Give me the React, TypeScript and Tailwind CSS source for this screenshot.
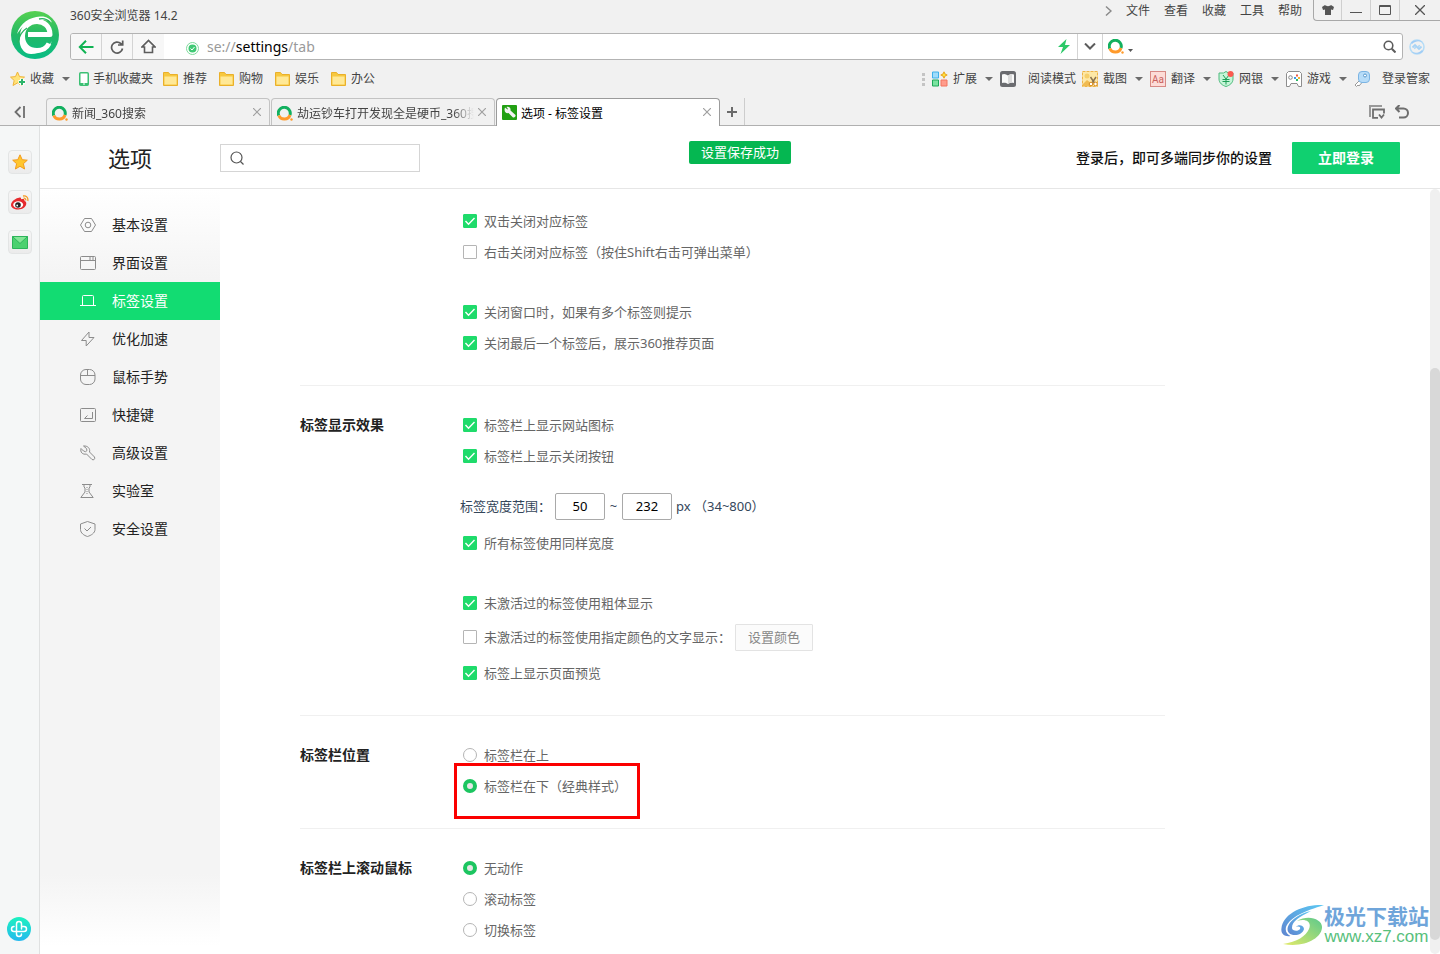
import { useState } from "react";
import type { ReactNode } from "react";
import clsx from "clsx";

const MENUS = ["文件", "查看", "收藏", "工具", "帮助"];
const FOLDERS = ["推荐", "购物", "娱乐", "办公"];

function Triangle() {
  return (
    <svg className="h-1 w-2 shrink-0" viewBox="0 0 8 4" fill="#6b6b6b">
      <path d="M0 0h8L4 4z" />
    </svg>
  );
}

function BrowserLogo() {
  return (
    <svg className="size-12" viewBox="0 0 48 48" fill="none">
      <defs>
        <linearGradient id="logo" x1="0" y1="0" x2="0" y2="1">
          <stop offset="0" stopColor="#56d150" />
          <stop offset="0.5" stopColor="#22b866" />
          <stop offset="1" stopColor="#08bd86" />
        </linearGradient>
      </defs>
      <circle cx="24" cy="24" r="24" fill="url(#logo)" />
      <path
        d="M17 23.500h22C39 15 33 10.500 26 10.500c-8 0-14.500 6-14.500 14.500S17 39.500 26 39.500c6 0 10-3 12-7"
        stroke="#fff"
        strokeWidth="5"
        strokeLinejoin="round"
      />
      <path d="M6 23C9 12 19 6 29 5.500c6-.5 10 2 12 6-4-3-8-3-12-2C18 10 11 15 6 23z" fill="#fff" />
      <path d="M41 30c-3 8-11 13-21 13-6 0-10-5-11-10-1-4 0-8 3-11-1 10 2 17 12 18 8 1 13-4 17-10z" fill="#fff" />
      <path d="M7 32c1-8 4-12 9-15M28 8c4-1 8 0 11 3" stroke="#27b45f" strokeWidth="1.300" />
    </svg>
  );
}

function SearchBrandIcon() {
  return (
    <svg className="size-4 shrink-0" viewBox="0 0 16 16" fill="none" strokeWidth="3">
      <path d="M1.700 9.500A6 6 0 1 1 13 9" stroke="#12b05f" />
      <path d="M1.800 9.500A6 6 0 0 0 13 9" stroke="#ff9a2b" />
      <circle cx="14.500" cy="13.500" r="1.200" fill="#ff9a2b" />
    </svg>
  );
}

function StarPlusIcon() {
  return (
    <svg className="size-4" viewBox="0 0 16 16">
      <path d="M7.500 1l2 4.600 5 .5-3.700 3.400 1 5-4.300-2.600L3 14.500l1.200-5L.500 6.100l5-.5z" fill="#ffe37a" stroke="#f0b53a" />
      <path d="M12 7.500v7M8.500 11h7" stroke="#fff" strokeWidth="4" />
      <path d="M12 8v6M9 11h6" stroke="#2db56b" strokeWidth="2" />
    </svg>
  );
}

function FolderIcon() {
  return (
    <svg className="h-[14px] w-[15px]" viewBox="0 0 15 14">
      <path d="M.5 13.500V.500h5l1.500 2h7.500v11z" fill="#f7c83f" stroke="#eab02a" />
      <path d="M1.500 4.500h12v8h-12z" fill="#ffe896" />
    </svg>
  );
}

const pluginIcons: Record<string, ReactNode> = {
  grid: (
    <>
      <path d="M.5 1h6v6h-6z" fill="#9fdcfb" stroke="#3fb0ea" />
      <path d="M.5 9h6v6h-6z" fill="#7be3a0" stroke="#1ea85a" />
      <path d="M9 9h6v6H9z" fill="#ff9c8c" stroke="#f3755f" />
      <path d="M12 .8l1 2.200 2.200 1-2.200 1-1 2.200-1-2.200-2.200-1 2.200-1z" fill="#ffe23a" stroke="#eaa51c" />
    </>
  ),
  book: (
    <>
      <rect width="16" height="16" rx="2.500" fill="#6b6c70" />
      <path d="M2 3.500c2-1 4-.5 6 1 2-1.500 4-2 6-1v8.500c-2-.5-4-.5-6 1-2-1.500-4-1.500-6-1z" fill="#fafafa" />
      <path d="M8 4.500c1.500-1 3-1.700 4-1.500v8.500c-1.500 0-2.800.5-4 1.500z" fill="#dcdcdc" />
    </>
  ),
  shot: (
    <>
      <rect x=".5" y=".5" width="15" height="15" fill="#fde8a6" stroke="#eeb445" strokeDasharray="3 1" />
      <circle cx="5" cy="5" r="2.500" fill="#f6cf6b" />
      <path d="M1 13l4-4 4 3 2 3H1z" fill="#f0bb52" />
      <path d="M8.500 6l4 6M14 6l-4 6" stroke="#8a7350" strokeWidth="1.500" />
      <circle cx="9" cy="13" r="1.800" fill="#fff" stroke="#d78b1c" />
      <circle cx="13.500" cy="13" r="1.800" fill="#fff" stroke="#d78b1c" />
    </>
  ),
  translate: (
    <>
      <rect x=".5" y=".5" width="15" height="15" fill="#fddcd7" stroke="#d78a85" />
      <text x="2" y="11.500" fontSize="10" fill="#c9625e" fontFamily="Roboto, sans-serif">Aa</text>
    </>
  ),
  bank: (
    <>
      <path d="M8 .500l2.500 1.500H15v6c0 4-3.500 6.500-7 7.500C4.500 14.500 1 12 1 8V2h4.500z" fill="#c6f5d8" stroke="#4cba7c" />
      <path d="M5 4l3 4 3-4M4.500 8.500h7M4.500 10.500h7M8 8v5.500" stroke="#1f9e57" fill="none" />
      <circle cx="12.500" cy="3" r="3" fill="#fb5a50" />
    </>
  ),
  game: (
    <>
      <path d="M2.500.500h11l2 2v13h-3l-1.500-3H5l-1.500 3h-3v-13z" fill="#fff" stroke="#8d8d8d" />
      <circle cx="4.500" cy="6.500" r="1.800" fill="none" stroke="#888" />
      <path d="M8 6h2v2H8z" fill="#3c9be8" />
      <path d="M10 3.500h2v2h-2z" fill="#f05b46" />
      <path d="M12 6h2v2h-2z" fill="#f5b32e" />
      <path d="M10 8h2v2h-2z" fill="#2bb867" />
    </>
  ),
  key: (
    <>
      <path d="M6 9l-5 5 1.500 1.500L4 14l1 1 3-3.500" fill="#fff" stroke="#999" />
      <rect x="4.500" y=".500" width="11" height="11" rx="3.500" fill="#b7dcf8" stroke="#7bb4e3" />
      <circle cx="11" cy="4.500" r="1.500" fill="#fff" stroke="#5898cd" />
    </>
  ),
};

const PLUGINS = [
  { icon: "grid", label: "扩展", menu: true },
  { icon: "book", label: "阅读模式", menu: false },
  { icon: "shot", label: "截图", menu: true },
  { icon: "translate", label: "翻译", menu: true },
  { icon: "bank", label: "网银", menu: true },
  { icon: "game", label: "游戏", menu: true },
  { icon: "key", label: "登录管家", menu: false },
];

function TitleRow() {
  return (
    <div className="flex h-[33px] items-start justify-between">
      <h1 className="pt-2 leading-4">360安全浏览器 14.2</h1>
      <div className="flex">
        <nav className="flex items-center gap-[14px] pr-[11px]">
          <button aria-label="更多">
            <svg className="h-3 w-[7px]" viewBox="0 0 7 12" fill="none" stroke="#8a8a8a" strokeWidth="1.500">
              <path d="M1 1.500L6 6l-5 4.500" />
            </svg>
          </button>
          {MENUS.map((menu) => (
            <button key={menu} className="leading-5">{menu}</button>
          ))}
        </nav>
        <div className="flex h-[21px] divide-x divide-[#cfcfcf] rounded-bl border-b border-l border-[#a8a8a8]">
          <button aria-label="皮肤" className="flex w-7 items-center justify-center">
            <svg className="h-[10px] w-3" viewBox="0 0 12 10" fill="#555">
              <path d="M0 2l3-2c1 1.500 5 1.500 6 0l3 2-1 3-2-.5V10H3V4.500L1 5z" />
            </svg>
          </button>
          <button aria-label="最小化" className="flex w-[29px] items-center justify-center">
            <svg className="size-3" viewBox="0 0 12 12"><path d="M0 8.500h12" stroke="#555" /></svg>
          </button>
          <button aria-label="最大化" className="flex w-[29px] items-center justify-center">
            <svg className="h-[10px] w-3" viewBox="0 0 12 10" fill="none" stroke="#555">
              <path d="M.5.500h11v9H.500zM.5 1.500h11" />
            </svg>
          </button>
          <button aria-label="关闭" className="flex w-10 items-center justify-center">
            <svg className="size-[10px]" viewBox="0 0 10 10" stroke="#555" strokeWidth="1.300">
              <path d="M0 0l10 10M10 0L0 10" />
            </svg>
          </button>
        </div>
      </div>
    </div>
  );
}

function AddressRow() {
  return (
    <div className="flex items-center gap-[6px] pr-[15px]">
      <div className="flex h-[27px] flex-1 overflow-hidden rounded-[3px] border border-[#b3b3b3] bg-white">
        <div className="flex divide-x divide-[#d4d4d4] bg-[#f7f7f7]">
          <button aria-label="后退" className="flex w-[31px] items-center justify-center">
            <svg className="h-[14px] w-4" viewBox="0 0 16 14" fill="none" stroke="#10b353" strokeWidth="2">
              <path d="M15.500 7H2M8 .700L1.800 7 8 13.300" />
            </svg>
          </button>
          <button aria-label="刷新" className="flex w-[31px] items-center justify-center">
            <svg className="size-[14px]" viewBox="0 0 14 14" fill="none" stroke="#5c5c5c" strokeWidth="1.700">
              <path d="M12.500 8.500A5.500 5.500 0 1 1 10.800 3.500L12.300 4.800M12.700.500V5H8" />
            </svg>
          </button>
          <button aria-label="主页" className="flex w-[31px] items-center justify-center">
            <svg className="size-[15px]" viewBox="0 0 15 15" fill="none" stroke="#5c5c5c" strokeWidth="1.600">
              <path d="M3.500 8v5.500h8V8H14L7.500 1.500 1 8z" />
            </svg>
          </button>
        </div>
        <div className="flex flex-1 items-center gap-2 pl-[22px]">
          <svg className="mt-1 size-[13px]" viewBox="0 0 13 13" fill="none">
            <circle cx="6.500" cy="6.500" r="6" stroke="#7fd99c" />
            <circle cx="6.500" cy="6.500" r="4" fill="#40c974" />
            <path d="M4.500 6.500L6 8l2.500-3" stroke="#fff" />
          </svg>
          <p className="text-sm leading-5 text-[#9a9a9a]">
            se://<span className="text-black">settings</span>/tab
          </p>
        </div>
        <div className="flex divide-x divide-[#d4d4d4]">
          <button aria-label="极速模式" className="flex w-7 items-center justify-center">
            <svg className="h-[15px] w-3" viewBox="0 0 12 15" fill="#2cc968">
              <path d="M8.500 0L0 8h5L2.500 15 12 6H7z" />
            </svg>
          </button>
          <button aria-label="历史地址" className="flex w-[25px] items-center justify-center">
            <svg className="h-[7px] w-3" viewBox="0 0 12 7" fill="none" stroke="#5c5c5c" strokeWidth="2">
              <path d="M1 .500l5 5 5-5" />
            </svg>
          </button>
          <div className="flex w-[299px] items-center justify-between pr-[6px] pl-[5px]">
            <button aria-label="搜索引擎" className="flex items-center gap-1">
              <SearchBrandIcon />
              <svg className="mt-2 h-[3px] w-[5px]" viewBox="0 0 5 3" fill="#555"><path d="M0 0h5L2.500 3z" /></svg>
            </button>
            <button aria-label="搜索">
              <svg className="size-[13px]" viewBox="0 0 13 13" fill="none" stroke="#5c5c5c" strokeWidth="1.600">
                <circle cx="5.500" cy="5.500" r="4.300" />
                <path d="M8.800 8.800l3.700 3.700" strokeWidth="2" />
              </svg>
            </button>
          </div>
        </div>
      </div>
      <svg className="size-4" viewBox="0 0 16 16" fill="none">
        <circle cx="8" cy="8" r="7" stroke="#b4dcf7" strokeWidth="1.500" />
        <path d="M2 3.500c3-3 9-3 11.500-.500C10 1.500 6 2 3 5zM14 12.500c-3 3-9 3-11.500.500C6 14.500 10 14 13 11z" fill="#9fcbf5" />
        <path d="M3.500 8.500L6 6l4 4 2.500-2.500M6.500 9.500L5.500 8.500M9.500 6.500l1 1" stroke="#a7d3f5" strokeWidth="1.800" />
      </svg>
    </div>
  );
}

function BookmarkBar() {
  return (
    <div className="flex h-[38px] items-center justify-between px-[10px]">
      <div className="flex items-center">
        <button className="flex items-center gap-1">
          <StarPlusIcon />
          收藏
          <span className="ml-1"><Triangle /></span>
        </button>
        <button className="ml-[9px] flex items-center gap-1">
          <svg className="h-[14px] w-[10px]" viewBox="0 0 10 14">
            <rect x=".750" y=".750" width="8.500" height="12.500" rx="1" fill="#fff" stroke="#3cc074" strokeWidth="1.500" />
            <path d="M1 11h8v2H1z" fill="#3cc074" />
            <path d="M4 12h2" stroke="#fff" />
          </svg>
          手机收藏夹
        </button>
        <div className="ml-[10px] flex gap-3">
          {FOLDERS.map((folder) => (
            <button key={folder} className="flex items-center gap-[5px]">
              <FolderIcon />
              {folder}
            </button>
          ))}
        </div>
      </div>
      <div className="flex items-center gap-[7px]">
        <svg className="h-[13px] w-[3px]" viewBox="0 0 3 13" fill="#c4c4c4">
          <path d="M0 0h3v3H0zM0 5h3v3H0zM0 10h3v3H0z" />
        </svg>
        {PLUGINS.map(({ icon, label, menu }) => (
          <button key={label} className={clsx("flex items-center", menu ? "gap-[5px]" : "-mr-px gap-3 last:mr-0")}>
            <svg className="size-4" viewBox="0 0 16 16">{pluginIcons[icon]}</svg>
            {label}
            {menu && <span className="ml-[3px]"><Triangle /></span>}
          </button>
        ))}
      </div>
    </div>
  );
}

interface TabProps {
  title: string;
  icon: ReactNode;
  active?: boolean;
}

function Tab({ title, icon, active }: TabProps) {
  return (
    <div
      role="tab"
      aria-selected={!!active}
      className={clsx(
        "flex w-56 items-center gap-1 rounded-t border border-b-0 pr-2 pl-[5px]",
        active ? "-mb-px border-[#9b9b9b] bg-white pb-px text-black" : "border-[#c3c3c3] bg-[#f1f1f1]",
      )}
    >
      {icon}
      <span
        className={clsx(
          "flex-1 overflow-hidden pt-1 leading-5 whitespace-nowrap",
          !active && "[mask-image:linear-gradient(to_right,black_88%,transparent)]",
        )}
      >
        {title}
      </span>
      <button aria-label="关闭标签">
        <svg className="size-2" viewBox="0 0 8 8" stroke="#a0a0a0" strokeWidth="1.200">
          <path d="M0 0l8 8M8 0L0 8" />
        </svg>
      </button>
    </div>
  );
}

function TabStrip() {
  return (
    <div className="flex h-7 border-b border-[#b0b0b0]">
      <button aria-label="收起侧栏" className="flex w-[46px] items-center pl-[14px]">
        <svg className="h-3 w-[11px]" viewBox="0 0 11 12" fill="none" stroke="#6e6e6e" strokeWidth="1.800">
          <path d="M6.500 1l-5 5 5 5M10 0v12" />
        </svg>
      </button>
      <div role="tablist" className="flex gap-px">
        <Tab title="新闻_360搜索" icon={<span className="mt-1"><SearchBrandIcon /></span>} />
        <Tab title="劫运钞车打开发现全是硬币_360搜索" icon={<span className="mt-1"><SearchBrandIcon /></span>} />
        <Tab
          active
          title="选项 - 标签设置"
          icon={
            <svg className="size-[15px]" viewBox="0 0 15 15">
              <rect width="15" height="15" rx="1" fill="#22a013" />
              <path d="M3 2.500l2.500 2 .5-.5L4.500 2C7 1.300 9 3 8.500 5.500l5 4.500c.5 1.500-1 3-2.500 2.500L6.500 8C4 8.800 1.500 6.500 3 2.500z" fill="#f2f2f2" />
            </svg>
          }
        />
      </div>
      <button aria-label="新建标签" className="flex w-[25px] items-center justify-center border-r border-[#cdcdcd]">
        <svg className="size-[10px]" viewBox="0 0 10 10" stroke="#6b6b6b" strokeWidth="2">
          <path d="M5 0v10M0 5h10" />
        </svg>
      </button>
      <div className="ml-auto flex items-center gap-[10px] pr-[31px]">
        <button aria-label="标签列表">
          <svg className="h-[14px] w-4" viewBox="0 0 16 14" fill="none">
            <path d="M1 12V1h12" stroke="#999" strokeWidth="2" />
            <path d="M9 12.800H4V4.500h11v4M10 9.500l2.500 3 2.500-3" stroke="#6e6e6e" strokeWidth="1.800" />
          </svg>
        </button>
        <button aria-label="恢复标签">
          <svg className="size-[14px]" viewBox="0 0 14 14" fill="none" stroke="#6e6e6e" strokeWidth="2">
            <path d="M4.500 0L1 3.500 4.500 7M1 3.500h7.500a4.500 4.500 0 0 1 0 9H4" />
          </svg>
        </button>
      </div>
    </div>
  );
}

function SideRail() {
  const tile =
    "flex size-6 items-center justify-center rounded border border-[#e3e5e5] bg-linear-to-b from-[#f6f6f6] to-[#ebebeb]";

  return (
    <aside className="flex w-10 shrink-0 flex-col items-center border-r border-[#dfe1e1] bg-[#f5f7f7] pt-6 pb-[13px]">
      <div className="flex flex-col gap-4">
        <button aria-label="收藏夹" className={tile}>
          <svg className="size-4" viewBox="0 0 16 16">
            <path d="M8 .800l2.200 4.900 5.100.500-3.900 3.500 1.200 5.300L8 12.300 3.400 15l1.200-5.300L.700 6.200l5.100-.5z" fill="#ffc62e" stroke="#f39b1d" />
          </svg>
        </button>
        <button aria-label="微博" className={tile}>
          <svg className="h-[15px] w-[18px] shrink-0" viewBox="0 0 18 15">
            <path d="M7 3c2-1 3.500-.5 3 1.300 2-.8 4-.5 3.500 1.700 1 .3 1.800 1 1.800 2.500 0 3-3.500 6-8 6C3 14.500 0 12.500 0 10c0-3 4-6.500 7-7z" fill="#e62a2d" />
            <ellipse cx="7.200" cy="9.800" rx="5" ry="3.500" fill="#fff" />
            <circle cx="7" cy="10" r="2.800" fill="#222" />
            <circle cx="6.200" cy="10.500" r=".9" fill="#fff" />
            <path d="M12 1c3-.8 5.500 1.500 4.800 5M12.500 3.200c1.400-.3 2.500.8 2.200 2.200" fill="none" stroke="#f59a23" strokeWidth="1.300" />
          </svg>
        </button>
        <button aria-label="邮箱" className={tile}>
          <svg className="h-[13px] w-4" viewBox="0 0 16 13">
            <path d="M.5.500h15v12H.5z" fill="#4bd16f" stroke="#2db45a" />
            <path d="M.5.500L8 7.500l7.500-7z" fill="#84e596" stroke="#2db45a" />
          </svg>
        </button>
      </div>
      <button aria-label="医疗" className="mt-auto mr-px">
        <svg className="size-6" viewBox="0 0 24 24">
          <defs>
            <linearGradient id="care" x1="0" y1="0" x2="0" y2="1">
              <stop offset="0" stopColor="#1cf2bf" />
              <stop offset="1" stopColor="#25b9ef" />
            </linearGradient>
          </defs>
          <circle cx="12" cy="12" r="12" fill="url(#care)" />
          <path
            d="M14.500 12V7a2.500 2.500 0 0 0-5 0v10a2.500 2.500 0 0 0 5 0M12 14.500H7a2.500 2.500 0 0 1 0-5M14.500 9.500H17a2.500 2.500 0 0 1 0 5h-5"
            fill="none"
            stroke="#fff"
            strokeWidth="1.500"
            strokeLinecap="round"
          />
        </svg>
      </button>
    </aside>
  );
}

const NAV: { label: string; icon: ReactNode }[] = [
  {
    label: "基本设置",
    icon: <><path d="M4.500 1.500h7L15.500 8l-4 6.500h-7L.500 8z" /><circle cx="8" cy="8" r="2.800" /></>,
  },
  {
    label: "界面设置",
    icon: <><rect x=".5" y="1.500" width="15" height="13" rx="1" /><path d="M.5 5.500h15M10 2v3M13 2v3" /></>,
  },
  { label: "标签设置", icon: <path d="M0 12.500h16M2.500 12.500v-9a1 1 0 0 1 1-1h9a1 1 0 0 1 1 1v9" /> },
  { label: "优化加速", icon: <path d="M9 1L1.500 9.500h4.700v5.500L14 6.500H9z" strokeLinejoin="round" /> },
  {
    label: "鼠标手势",
    icon: <><rect x=".5" y=".5" width="14.500" height="15" rx="5.500" /><path d="M.5 6.500H15M7.500.500v6" /></>,
  },
  {
    label: "快捷键",
    icon: <><rect x=".5" y="1.500" width="15" height="13" rx="1" /><path d="M12.500 5v6.500h-8l3-3" /></>,
  },
  {
    label: "高级设置",
    icon: (
      <path
        d="M3.500 1l3 2.500.500 2-1.500 1.200-2-.7L1 3.500C0 7 2.500 10 6.500 9l5.500 5.500c1.500 1 3.500-.5 2.500-2.500L9.500 7c1-3.500-2-6.500-6-6z"
        strokeLinejoin="round"
      />
    ),
  },
  {
    label: "实验室",
    icon: (
      <>
        <path d="M2 1.500h10M4 1.500v2.500l1 1v4L.800 14.500h12.400L9 9V5l1-1V1.500" strokeLinejoin="round" />
        <path d="M7 4v7" strokeDasharray="1 1" />
      </>
    ),
  },
  {
    label: "安全设置",
    icon: <><path d="M7.500.500L15 3v5.500c0 3.500-4 6-7.500 7-3.500-1-7-3.500-7-7V3z" /><path d="M4.500 7.500L7 10l4-4" /></>,
  },
];

function SettingsNav() {
  const [current, setCurrent] = useState("标签设置");

  return (
    <nav className="w-[180px] shrink-0 bg-[linear-gradient(to_bottom,#fff,#f4f4f4_90px,#f4f4f4_calc(100%-80px),#fff_calc(100%-8px))] pt-[17px]">
      {NAV.map(({ label, icon }) => (
        <button
          key={label}
          onClick={() => setCurrent(label)}
          className={clsx(
            "flex h-[38px] w-full items-center gap-4 pl-10 text-sm",
            current === label ? "bg-[#12dc72] text-white" : "text-[#222]",
          )}
        >
          <svg
            className={clsx("size-4", current === label ? "stroke-white" : "stroke-[#8c8c8c]")}
            viewBox="0 0 16 16"
            fill="none"
          >
            {icon}
          </svg>
          {label}
        </button>
      ))}
    </nav>
  );
}

interface OptionProps {
  label: string;
  checked?: boolean;
  className?: string;
}

function CheckOption({ label, checked, className }: OptionProps) {
  return (
    <label className={clsx("flex h-5 w-fit items-center gap-[7px] pl-[3px]", className)}>
      <span className="relative size-[14px]">
        <input
          type="checkbox"
          defaultChecked={checked}
          className="peer block size-[14px] appearance-none rounded-[1px] border border-[#b5b5b5] bg-white checked:border-[#1fdb6b] checked:bg-[#1fdb6b]"
        />
        <svg
          className="pointer-events-none absolute inset-0 hidden size-[14px] peer-checked:block"
          viewBox="0 0 14 14"
          fill="none"
          stroke="#fff"
          strokeWidth="1.400"
        >
          <path d="M2.500 7l3 3.200L11.500 4" />
        </svg>
      </span>
      {label}
    </label>
  );
}

function RadioOption({ label, checked, className, name }: OptionProps & { name: string }) {
  return (
    <label className={clsx("flex h-5 w-fit items-center gap-[7px] pl-[3px]", className)}>
      <input
        type="radio"
        name={name}
        defaultChecked={checked}
        className="size-[14px] appearance-none rounded-full border border-[#b5b5b5] bg-white checked:border-4 checked:border-[#1cc560] checked:bg-[#e6e6e6]"
      />
      {label}
    </label>
  );
}

function Section({ title, children }: { title?: string; children: ReactNode }) {
  return (
    <section className="flex border-b border-[#f0f0f0] pt-[29px] pb-8 first:pt-[22px] last:border-b-0">
      <h3 className="w-40 shrink-0 text-sm font-bold text-[#222]">{title}</h3>
      <div className="flex-1">{children}</div>
    </section>
  );
}

function TabSettings() {
  const field = "h-[27px] w-[50px] rounded-[2px] border border-[#a9a9a9] text-center text-[13px] text-black";

  return (
    <main className="min-w-0 flex-1 overflow-hidden pl-20 text-[13px] leading-5 text-[#666]">
      <div className="max-w-[865px]">
        <Section>
          <CheckOption checked label="双击关闭对应标签" />
          <CheckOption className="mt-[11px]" label="右击关闭对应标签（按住Shift右击可弹出菜单）" />
          <CheckOption checked className="mt-10" label="关闭窗口时，如果有多个标签则提示" />
          <CheckOption checked className="mt-[11px]" label="关闭最后一个标签后，展示360推荐页面" />
        </Section>

        <Section title="标签显示效果">
          <CheckOption checked label="标签栏上显示网站图标" />
          <CheckOption checked className="mt-[11px]" label="标签栏上显示关闭按钮" />
          <div className="mt-[26px] flex h-7 items-center text-[#34465a]">
            <label htmlFor="min-width" className="mr-1">标签宽度范围：</label>
            <input id="min-width" className={field} defaultValue="50" />
            <span className="w-[17px] text-center">~</span>
            <input aria-label="最大宽度" className={field} defaultValue="232" />
            <span className="ml-1">px （34~800）</span>
          </div>
          <CheckOption checked className="mt-[13px]" label="所有标签使用同样宽度" />
          <CheckOption checked className="mt-10" label="未激活过的标签使用粗体显示" />
          <div className="mt-[10px] flex h-7 items-center gap-1">
            <CheckOption label="未激活过的标签使用指定颜色的文字显示：" />
            <button className="h-[27px] rounded-[1px] border border-[#e3e3e3] bg-[#fbfbfb] px-3 text-[#888]">
              设置颜色
            </button>
          </div>
          <CheckOption checked className="mt-3" label="标签上显示页面预览" />
        </Section>

        <Section title="标签栏位置">
          <RadioOption name="position" label="标签栏在上" />
          <div className="relative mt-[11px]">
            <RadioOption checked name="position" label="标签栏在下（经典样式）" />
            <div className="pointer-events-none absolute -top-[13px] -left-[6px] h-14 w-[186px] border-3 border-[#fb0000]" />
          </div>
        </Section>

        <Section title="标签栏上滚动鼠标">
          <RadioOption checked name="wheel" label="无动作" />
          <RadioOption name="wheel" className="mt-[11px]" label="滚动标签" />
          <RadioOption name="wheel" className="mt-[11px]" label="切换标签" />
        </Section>
      </div>
    </main>
  );
}

function PanelHeader() {
  return (
    <header className="relative flex h-[63px] items-center border-b border-[#e6e6e6] pt-[2px] pr-10">
      <h2 className="w-[180px] pl-[68px] text-[22px] leading-8 text-[#222]">选项</h2>
      <label className="flex h-7 w-[200px] items-center gap-2 border border-[#d5d5d5] px-[9px]">
        <svg className="size-[14px] shrink-0" viewBox="0 0 14 14" fill="none" stroke="#555" strokeWidth="1.200">
          <circle cx="6.500" cy="6.500" r="5.500" />
          <path d="M10.500 10.500L13.500 13.500" />
        </svg>
        <input aria-label="搜索设置" className="w-full min-w-0 text-sm outline-none" />
      </label>
      <div
        role="status"
        className="absolute top-[15px] left-1/2 -translate-x-1/2 rounded-[2px] bg-[#05b751] px-3 text-[13px] leading-[23px] text-white"
      >
        设置保存成功
      </div>
      <p className="ml-auto text-sm font-medium text-[#111]">登录后，即可多端同步你的设置</p>
      <button className="ml-5 h-8 w-[108px] rounded-[1px] bg-[#10d070] text-sm font-bold text-white">
        立即登录
      </button>
    </header>
  );
}

function SiteBadge() {
  return (
    <div className="pointer-events-none absolute right-[11px] bottom-2 flex items-center">
      <svg className="h-10 w-[43px]" viewBox="0 0 43 40">
        <defs>
          <linearGradient id="swirl-blue" x1="1" y1="0" x2="0" y2="1">
            <stop offset="0" stopColor="#5cc8f3" />
            <stop offset="1" stopColor="#5f86d0" />
          </linearGradient>
          <linearGradient id="swirl-green" x1="1" y1="0" x2="0" y2="1">
            <stop offset="0" stopColor="#5cc98c" />
            <stop offset="1" stopColor="#e3ea68" />
          </linearGradient>
        </defs>
        <path d="M43 0C22-1 2 9 .5 23c-1 6 3 9 9 8C6 29 4 27 5 22 9 12 24 6 43 0z" fill="url(#swirl-blue)" />
        <path d="M30 6C12 10 3 22 8 28c4 4 14 2 15-4 0-4-6-5-8-2 3-1 5 0 4 2-2 3-8 2-8-1C11 16 18 12 30 6z" fill="url(#swirl-blue)" />
        <path d="M16 16c9-3 15 1 12 8-3 7-12 13-26 15 22 4 38-6 39-16 1-9-14-14-25-7z" fill="url(#swirl-green)" />
      </svg>
      <div className="text-center whitespace-nowrap">
        <p className="text-[21px] leading-6 font-bold text-[#6fa5da]">极光下载站</p>
        <p className="font-['Liberation_Sans','Noto_Sans_CJK_SC',sans-serif] text-[17px] leading-[18px] text-[#58c07c]">
          www.xz7.com
        </p>
      </div>
    </div>
  );
}

export default function App() {
  return (
    <div className="flex h-screen flex-col overflow-hidden bg-white font-['Noto_Sans','Noto_Sans_CJK_SC',sans-serif] text-xs text-[#444]">
      <div className="shrink-0 bg-[#f1f1f1]">
        <div className="flex">
          <div className="w-[70px] pt-[11px] pl-[11px]">
            <BrowserLogo />
          </div>
          <div className="flex-1">
            <TitleRow />
            <AddressRow />
          </div>
        </div>
        <BookmarkBar />
        <TabStrip />
      </div>

      <div className="flex min-h-0 flex-1">
        <SideRail />
        <div className="relative flex min-w-0 flex-1 flex-col">
          <PanelHeader />
          <div className="flex min-h-0 flex-1">
            <SettingsNav />
            <TabSettings />
            <div className="w-[10px] rounded-full bg-[#f0f0f0] pt-[179px]">
              <div className="h-[572px] rounded-full bg-[#d8d8d8]" />
            </div>
          </div>
          <SiteBadge />
        </div>
      </div>
    </div>
  );
}
